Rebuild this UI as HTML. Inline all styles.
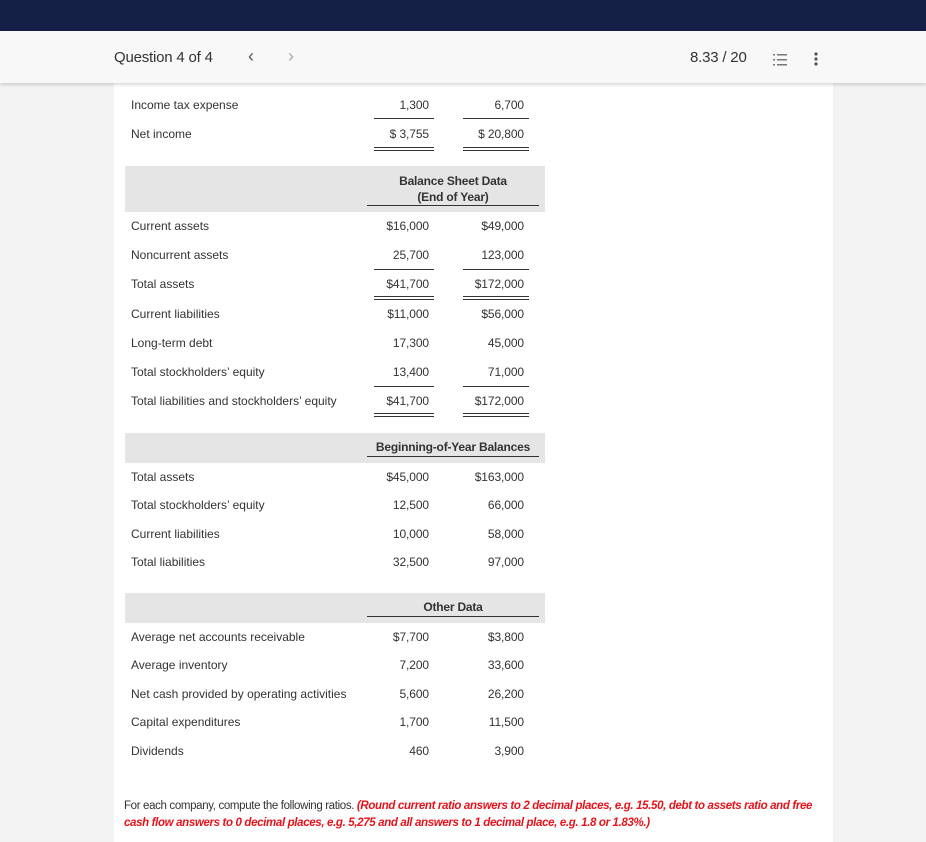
<!DOCTYPE html>
<html><head><meta charset="utf-8"><style>
*{margin:0;padding:0;box-sizing:border-box}
body{width:926px;height:842px;overflow:hidden;background:#f3f3f3;font-family:"Liberation Sans",sans-serif;color:#333;position:relative}
.top{position:absolute;left:0;top:0;width:926px;height:31px;background:#152046}
.hdr{position:absolute;left:0;top:31px;width:926px;height:52px;background:#f8f8f8;box-shadow:0 2px 3px rgba(0,0,0,.15);z-index:2}
.panel{position:absolute;left:114px;top:83px;width:719px;height:759px;background:#fff}
.t{position:absolute;font-size:12px;letter-spacing:0;color:#333;white-space:nowrap;line-height:14px;margin-top:1px}
.r{position:absolute;font-size:12px;letter-spacing:-0.1px;color:#333;white-space:nowrap;text-align:right;line-height:14px;margin-top:1px}
.g{position:absolute;left:125px;width:420px;background:#e5e5e5}
.ln{position:absolute;height:1px;background:#333}
.dl{position:absolute;height:4px;border-top:1px solid #333;border-bottom:1px solid #333}
.b{font-weight:bold;text-align:center;position:absolute;font-size:12px;letter-spacing:-0.2px;line-height:16px;color:#333;margin-top:1px}
</style></head><body>
<div class="top"></div>
<div class="hdr">
 <div style="position:absolute;left:114px;top:18px;font-size:15px;color:#333;letter-spacing:-0.2px">Question 4 of 4</div>
 <div style="position:absolute;left:248px;top:15px;font-size:18px;color:#555">&#8249;</div>
 <div style="position:absolute;left:288px;top:15px;font-size:18px;color:#aaa">&#8250;</div>
 <div style="position:absolute;left:690px;top:18px;font-size:15px;color:#333;letter-spacing:-0.2px">8.33 / 20</div>
 <svg style="position:absolute;left:772px;top:22px" width="16" height="14"><g fill="#777"><rect x="5" y="1" width="10" height="1.5"/><rect x="5" y="6" width="10" height="1.5"/><rect x="5" y="11" width="10" height="1.5"/><rect x="1" y="1" width="2" height="1.5"/><rect x="1" y="6" width="2" height="1.5"/><rect x="1" y="11" width="2" height="1.5"/></g></svg>
 <svg style="position:absolute;left:813px;top:20px" width="6" height="16"><g fill="#555"><circle cx="3" cy="3" r="1.6"/><circle cx="3" cy="8" r="1.6"/><circle cx="3" cy="13" r="1.6"/></g></svg>
</div>
<div class="panel"></div>

<div class="t" style="left:131px;top:97px">Income tax expense</div>
<div class="r" style="left:330px;width:99px;top:97px">1,300</div>
<div class="r" style="left:430px;width:94px;top:97px">6,700</div>
<div class="ln" style="left:374px;width:60px;top:118px"></div>
<div class="ln" style="left:463px;width:66px;top:118px"></div>
<div class="t" style="left:131px;top:126px">Net income</div>
<div class="r" style="left:330px;width:99px;top:126px">$ 3,755</div>
<div class="r" style="left:430px;width:94px;top:126px">$ 20,800</div>
<div class="dl" style="left:374px;width:60px;top:147px"></div>
<div class="dl" style="left:463px;width:66px;top:147px"></div>

<div class="g" style="top:166px;height:46px"></div>
<div class="b" style="left:367px;width:172px;top:172px">Balance Sheet Data<br>(End of Year)</div>
<div class="ln" style="left:367px;width:172px;top:205px"></div>

<div class="t" style="left:131px;top:218px">Current assets</div>
<div class="r" style="left:330px;width:99px;top:218px">$16,000</div>
<div class="r" style="left:430px;width:94px;top:218px">$49,000</div>
<div class="t" style="left:131px;top:247px">Noncurrent assets</div>
<div class="r" style="left:330px;width:99px;top:247px">25,700</div>
<div class="r" style="left:430px;width:94px;top:247px">123,000</div>
<div class="ln" style="left:374px;width:60px;top:269px"></div>
<div class="ln" style="left:463px;width:66px;top:269px"></div>
<div class="t" style="left:131px;top:276px">Total assets</div>
<div class="r" style="left:330px;width:99px;top:276px">$41,700</div>
<div class="r" style="left:430px;width:94px;top:276px">$172,000</div>
<div class="dl" style="left:374px;width:60px;top:296px"></div>
<div class="dl" style="left:463px;width:66px;top:296px"></div>
<div class="t" style="left:131px;top:306px">Current liabilities</div>
<div class="r" style="left:330px;width:99px;top:306px">$11,000</div>
<div class="r" style="left:430px;width:94px;top:306px">$56,000</div>
<div class="t" style="left:131px;top:335px">Long-term debt</div>
<div class="r" style="left:330px;width:99px;top:335px">17,300</div>
<div class="r" style="left:430px;width:94px;top:335px">45,000</div>
<div class="t" style="left:131px;top:364px">Total stockholders’ equity</div>
<div class="r" style="left:330px;width:99px;top:364px">13,400</div>
<div class="r" style="left:430px;width:94px;top:364px">71,000</div>
<div class="ln" style="left:374px;width:60px;top:386px"></div>
<div class="ln" style="left:463px;width:66px;top:386px"></div>
<div class="t" style="left:131px;top:393px">Total liabilities and stockholders’ equity</div>
<div class="r" style="left:330px;width:99px;top:393px">$41,700</div>
<div class="r" style="left:430px;width:94px;top:393px">$172,000</div>
<div class="dl" style="left:374px;width:60px;top:413px"></div>
<div class="dl" style="left:463px;width:66px;top:413px"></div>

<div class="g" style="top:433px;height:30px"></div>
<div class="b" style="left:367px;width:172px;top:438px">Beginning-of-Year Balances</div>
<div class="ln" style="left:367px;width:172px;top:456px"></div>
<div class="t" style="left:131px;top:469px">Total assets</div>
<div class="r" style="left:330px;width:99px;top:469px">$45,000</div>
<div class="r" style="left:430px;width:94px;top:469px">$163,000</div>
<div class="t" style="left:131px;top:497px">Total stockholders’ equity</div>
<div class="r" style="left:330px;width:99px;top:497px">12,500</div>
<div class="r" style="left:430px;width:94px;top:497px">66,000</div>
<div class="t" style="left:131px;top:526px">Current liabilities</div>
<div class="r" style="left:330px;width:99px;top:526px">10,000</div>
<div class="r" style="left:430px;width:94px;top:526px">58,000</div>
<div class="t" style="left:131px;top:554px">Total liabilities</div>
<div class="r" style="left:330px;width:99px;top:554px">32,500</div>
<div class="r" style="left:430px;width:94px;top:554px">97,000</div>

<div class="g" style="top:593px;height:30px"></div>
<div class="b" style="left:367px;width:172px;top:598px">Other Data</div>
<div class="ln" style="left:367px;width:172px;top:616px"></div>
<div class="t" style="left:131px;top:629px">Average net accounts receivable</div>
<div class="r" style="left:330px;width:99px;top:629px">$7,700</div>
<div class="r" style="left:430px;width:94px;top:629px">$3,800</div>
<div class="t" style="left:131px;top:657px">Average inventory</div>
<div class="r" style="left:330px;width:99px;top:657px">7,200</div>
<div class="r" style="left:430px;width:94px;top:657px">33,600</div>
<div class="t" style="left:131px;top:686px">Net cash provided by operating activities</div>
<div class="r" style="left:330px;width:99px;top:686px">5,600</div>
<div class="r" style="left:430px;width:94px;top:686px">26,200</div>
<div class="t" style="left:131px;top:714px">Capital expenditures</div>
<div class="r" style="left:330px;width:99px;top:714px">1,700</div>
<div class="r" style="left:430px;width:94px;top:714px">11,500</div>
<div class="t" style="left:131px;top:743px">Dividends</div>
<div class="r" style="left:330px;width:99px;top:743px">460</div>
<div class="r" style="left:430px;width:94px;top:743px">3,900</div>

<div style="position:absolute;left:124px;top:798px;width:700px;font-size:11.5px;letter-spacing:-0.35px;line-height:17px;color:#333">For each company, compute the following ratios. <span style="color:#e8121b;font-weight:bold;font-style:italic">(Round current ratio answers to 2 decimal places, e.g. 15.50, debt to assets ratio and free cash flow answers to 0 decimal places, e.g. 5,275 and all answers to 1 decimal place, e.g. 1.8 or 1.83%.)</span></div>
</body></html>
